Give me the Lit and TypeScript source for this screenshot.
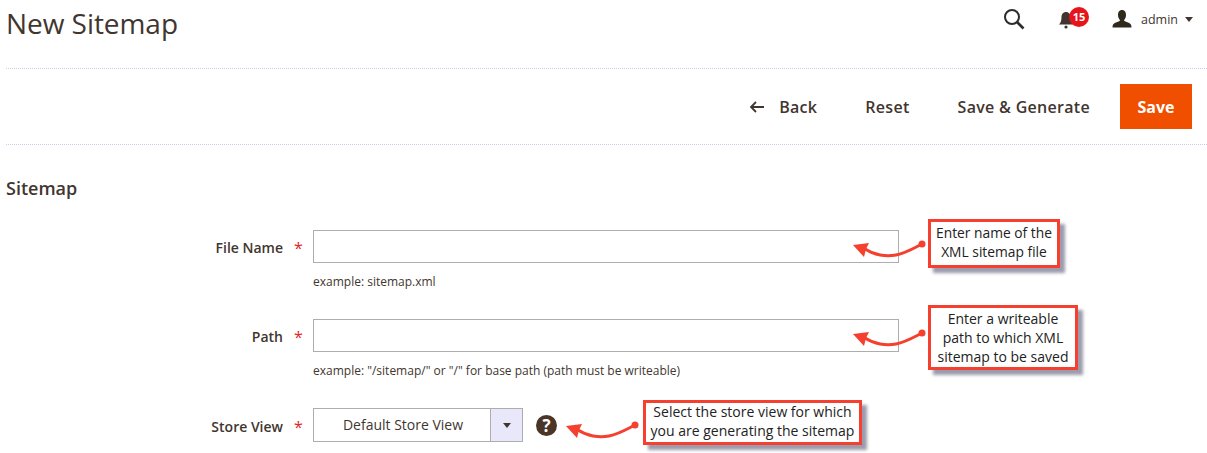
import { LitElement, html, css, svg } from "lit";
import { customElement } from "lit/decorators.js";

const arrow = svg`<svg class="arrow-svg" width="76" height="30" viewBox="0 0 76 30">
  <path d="M13 11 C22 17 34 19 44 17 C54 15 62 10 70 6" fill="none" stroke="#f5402f" stroke-width="3" stroke-linecap="round"/>
  <polygon points="1,7 17,5 14,11 12,19" fill="#f5402f"/>
  <circle cx="70" cy="6" r="3.500" fill="#f5402f"/>
</svg>`;

@customElement("app-root")
export class AppRoot extends LitElement {
  static styles = css`
    :host { display: block; position: relative; width: 1207px; height: 453px; overflow: hidden; background: #fff; color: #303030; font-family: "Open Sans", sans-serif; }
    .top { display: flex; align-items: flex-start; justify-content: space-between; height: 68px; margin-left: 6px; border-bottom: 1px dotted #cfcbe8; box-sizing: content-box; }
    h1 { margin: 0; padding-top: 4px; font-size: 28px; line-height: 38px; font-weight: 400; color: #41362f; letter-spacing: -.05px; }
    .tools { display: flex; align-items: center; height: 38px; padding-right: 14px; }
    .search { display: block; margin-right: 33px; }
    .bell { position: relative; width: 17px; height: 20px; margin-right: 37px; }
    .badge { position: absolute; left: 11px; top: -2px; width: 20px; height: 20px; border-radius: 50%; background: #e8141c; color: #fff; font-size: 11px; font-weight: 700; line-height: 20px; text-align: center; }
    .user { display: block; margin-right: 9px; }
    .name { font-size: 12.5px; color: #41362f; margin-right: 7px; }
    .caret { width: 0; height: 0; border-left: 4.5px solid transparent; border-right: 4.5px solid transparent; border-top: 5px solid #41362f; }
    .actions { display: flex; align-items: center; justify-content: flex-end; height: 75px; margin-left: 6px; padding-right: 15px; border-bottom: 1px dotted #cfcbe8; }
    .act { font-size: 16px; font-weight: 600; color: #41362f; letter-spacing: .3px; }
    .back { display: flex; align-items: center; gap: 14px; margin-right: 48px; }
    .reset { margin-right: 48px; }
    .gen { margin-right: 30px; }
    .save { width: 72px; height: 45px; background: #f04f00; color: #fff; font-size: 16px; font-weight: 700; display: flex; align-items: center; justify-content: center; }
    h2 { margin: 0; padding: 32px 0 0 6px; font-size: 18px; line-height: 22px; font-weight: 600; color: #41362f; }
    .form { padding-top: 31px; display: grid; grid-template-columns: 283px 30px 586px; align-items: center; }
    .label { text-align: right; font-size: 14px; font-weight: 600; color: #41362f; padding-top: 1px; }
    .label.low { padding-top: 3px; }
    .star { font-size: 16px; color: #e22626; padding-left: 11px; line-height: 1; padding-top: 3px; }
    .input { height: 33px; border: 1px solid #adadad; box-sizing: border-box; background: #fff; }
    .hint { grid-column: 3; font-size: 12px; line-height: 17px; color: #41362f; padding-top: 10px; height: 56px; box-sizing: border-box; }
    .select-wrap { display: flex; align-items: center; }
    .select { display: flex; width: 210px; height: 34px; border: 1px solid #adadad; box-sizing: border-box; }
    .value { flex: 1; text-align: center; font-size: 14px; line-height: 32px; color: #41362f; padding-left: 2px; }
    .drop { width: 31px; border-left: 1px solid #adadad; background: #e8e8fa; display: flex; align-items: center; justify-content: center; }
    .drop i { width: 0; height: 0; border-left: 4px solid transparent; border-right: 4px solid transparent; border-top: 5px solid #41362f; }
    .help { margin-left: 13px; width: 21px; height: 21px; border-radius: 50%; background: #4a3526; color: #fff; font-size: 17px; font-weight: 700; line-height: 21px; text-align: center; margin-top: 1px; }
    .callout { position: absolute; box-sizing: border-box; border: 3px solid #f5402f; background: #fff; box-shadow: 5px 5px 3px #9c9cae; color: #222; font-size: 14px; line-height: 19px; text-align: center; display: flex; align-items: center; justify-content: center; }
    .c1 { left: 928px; top: 219px; width: 132px; height: 49px; font-size: 13.8px; padding-bottom: 3px; }
    .c2 { left: 928px; top: 305px; width: 150px; height: 65px; padding-bottom: 1px; }
    .c3 { left: 643px; top: 400px; width: 219px; height: 45px; padding-bottom: 4px; }
    .anno { position: absolute; display: block; }
    .a1 { left: 852px; top: 238px; }
    .a2 { left: 852px; top: 327px; }
    .a3 { left: 565px; top: 419px; }
  `;

  render() {
    return html`
      <div class="top">
        <h1>New Sitemap</h1>
        <div class="tools">
          <svg class="search" width="22" height="22" viewBox="0 0 22 22" fill="none" stroke="#2c2c2c">
            <circle cx="9" cy="9" r="7" stroke-width="2"/><path d="M14 14 L20.500 20.500" stroke-width="2.600"/>
          </svg>
          <div class="bell">
            <svg width="16" height="18" viewBox="0 0 16 18" style="margin-top:2px">
              <path d="M8 1 C5 1 3.500 3.500 3.500 6 C3.500 10 2.500 12 1 13.500 L15 13.500 C13.500 12 12.500 10 12.500 6 C12.500 3.500 11 1 8 1 Z" fill="#41362f"/>
              <circle cx="8" cy="16" r="1.600" fill="#41362f"/>
            </svg>
            <span class="badge">15</span>
          </div>
          <svg class="user" width="20" height="18" viewBox="0 0 20 18">
            <path d="M10 0 C7 0 6 2.500 6 5 C6 7.500 7 9 8 10 C8 11 7 11.500 4 12.500 C1.500 13.300 .5 14.500 .5 17.500 L19.500 17.500 C19.500 14.500 18.500 13.300 16 12.500 C13 11.500 12 11 12 10 C13 9 14 7.500 14 5 C14 2.500 13 0 10 0 Z" fill="#2f2a1c"/>
          </svg>
          <span class="name">admin</span>
          <span class="caret"></span>
        </div>
      </div>
      <div class="actions">
        <span class="act back">
          <svg width="16" height="12" viewBox="0 0 16 12" fill="none" stroke="#41362f" stroke-width="1.800"><path d="M15 6 H2 M7 1 L2 6 L7 11"/></svg>
          Back
        </span>
        <span class="act reset">Reset</span>
        <span class="act gen">Save &amp; Generate</span>
        <span class="save">Save</span>
      </div>
      <h2>Sitemap</h2>
      <div class="form">
        <div class="label">File Name</div><div class="star">*</div><div class="input"></div>
        <div class="hint">example: sitemap.xml</div>
        <div class="label">Path</div><div class="star">*</div><div class="input"></div>
        <div class="hint">example: "/sitemap/" or "/" for base path (path must be writeable)</div>
        <div class="label low">Store View</div><div class="star">*</div>
        <div class="select-wrap">
          <div class="select"><div class="value">Default Store View</div><div class="drop"><i></i></div></div>
          <div class="help">?</div>
        </div>
      </div>
      <div class="callout c1">Enter name of the<br />XML sitemap file</div>
      <div class="callout c2">Enter a writeable<br />path to which XML<br />sitemap to be saved</div>
      <div class="callout c3">Select the store view for which<br />you are generating the sitemap</div>
      <span class="anno a1">${arrow}</span>
      <span class="anno a2">${arrow}</span>
      <span class="anno a3">${arrow}</span>
    `;
  }
}
